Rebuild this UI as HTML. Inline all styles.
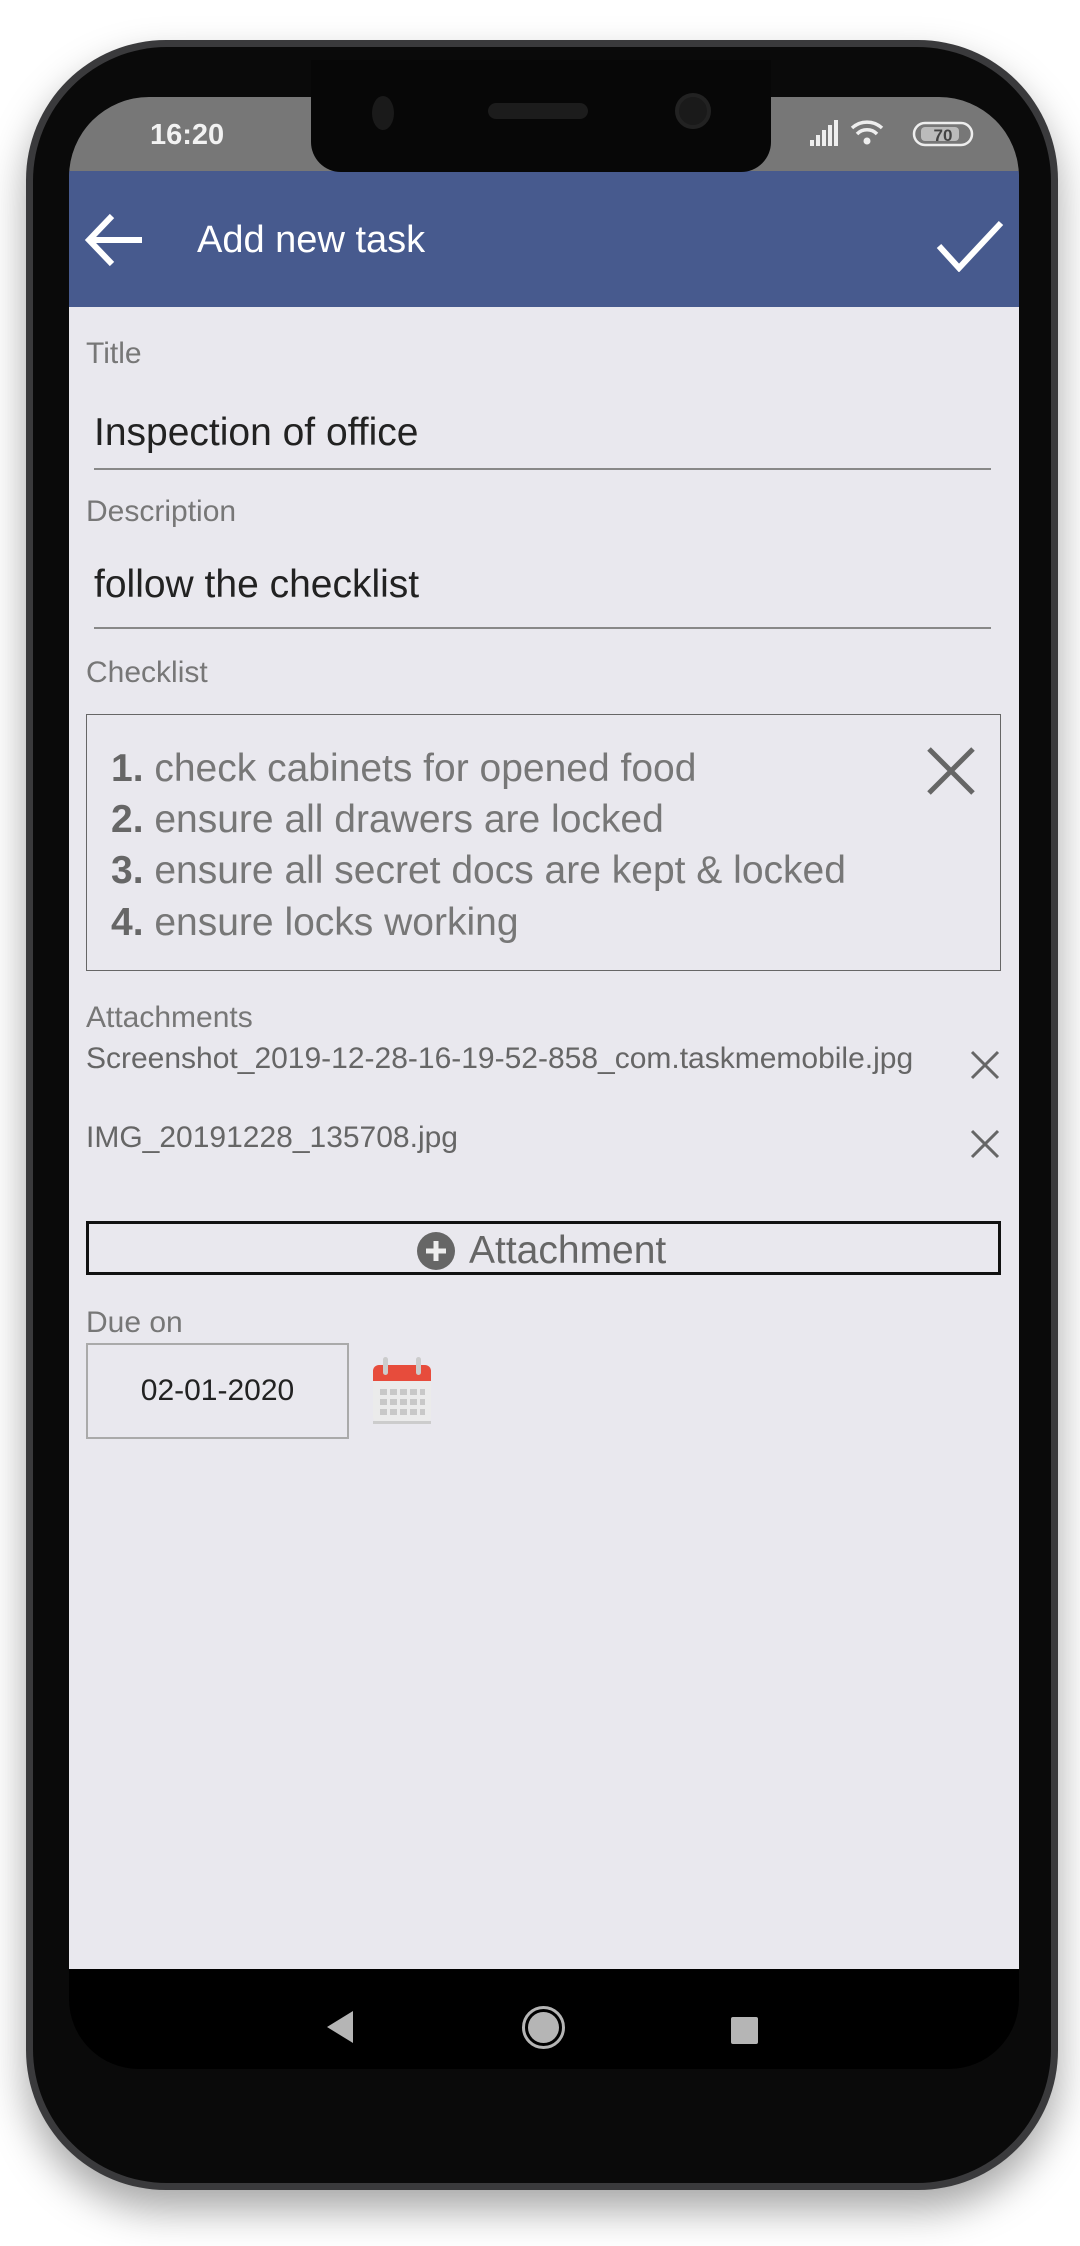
<!DOCTYPE html>
<html><head><meta charset="utf-8"><style>
*{margin:0;padding:0;box-sizing:border-box}
body{width:1080px;height:2246px;background:#fff;position:relative;overflow:hidden;font-family:"Liberation Sans",sans-serif}
.a{position:absolute}
.lbl{position:absolute;left:86px;font-size:30px;color:#777;line-height:1;white-space:nowrap}
.inp{position:absolute;left:94px;font-size:39px;color:#222;line-height:1}
.li{position:absolute;left:111px;font-size:39px;color:#777;line-height:1;white-space:nowrap}
.li b{color:#666}
.fn{position:absolute;left:86px;font-size:30px;color:#666;line-height:1;white-space:nowrap}
</style></head><body>
<div class="a" style="left:26px;top:40px;width:1032px;height:2150px;border-radius:140px;box-shadow:0 20px 40px rgba(0,0,0,.35);background:#3a3a3c"></div>
<div class="a" style="left:33px;top:47px;width:1018px;height:2136px;border-radius:134px;background:#0a0a0a"></div>
<div class="a" style="left:69px;top:97px;width:950px;height:1972px;border-radius:80px 80px 70px 70px;background:#000;overflow:hidden">
  <div class="a" style="left:0;top:0;width:950px;height:80px;background:#777"></div>
  <div class="a" style="left:0;top:74px;width:950px;height:136px;background:#475a8e"></div>
  <div class="a" style="left:0;top:210px;width:950px;height:1662px;background:#e9e8ee"></div>
</div>
<div class="a" style="left:311px;top:60px;width:460px;height:112px;background:#070707;border-radius:0 0 30px 30px"></div>
<div class="a" style="left:488px;top:103px;width:100px;height:16px;border-radius:8px;background:#1c1c1c"></div>
<div class="a" style="left:675px;top:93px;width:36px;height:36px;border-radius:50%;background:#1a1a1a;border:4px solid #222"></div>
<div class="a" style="left:372px;top:96px;width:22px;height:34px;border-radius:50%;background:#1a1a1a"></div>
<div class="a" style="left:150px;top:119px;font-size:29px;font-weight:bold;color:#f2f2f2">16:20</div>
<svg class="a" style="left:810px;top:120px" width="165" height="30" viewBox="0 0 165 30">
 <g fill="#eee"><rect x="0" y="20" width="4" height="6"/><rect x="6" y="15" width="4" height="11"/><rect x="12" y="10" width="4" height="16"/><rect x="18" y="5" width="4" height="21"/><rect x="24" y="0" width="4" height="26"/></g>
 <g fill="none" stroke="#eee" stroke-width="3.5"><path d="M42 8a22 22 0 0 1 30 0"/><path d="M47 14a14 14 0 0 1 20 0"/></g>
 <circle cx="57" cy="21" r="3.5" fill="#eee"/>
 <rect x="104" y="3" width="58" height="22" rx="11" fill="none" stroke="#eee" stroke-width="2.5"/>
 <rect x="111" y="7" width="38" height="14" rx="4" fill="#bbb"/>
 <text x="133" y="21" font-size="17" font-weight="bold" fill="#444" text-anchor="middle" font-family="Liberation Sans">70</text>
</svg>
<svg class="a" style="left:84px;top:212px" width="62" height="56" viewBox="0 0 62 56"><path d="M58 28H6M28 4L5 28l23 24" fill="none" stroke="#fff" stroke-width="6"/></svg>
<div class="a" style="left:197px;top:219px;font-size:38px;color:#fff">Add new task</div>
<svg class="a" style="left:936px;top:220px" width="68" height="52" viewBox="0 0 68 52"><path d="M3 26l20 22L65 3" fill="none" stroke="#fff" stroke-width="6"/></svg>
<div class="lbl" style="top:339px">Title</div>
<div class="inp" style="top:413px">Inspection of office</div>
<div class="a" style="left:94px;top:468px;width:897px;height:2px;background:#888"></div>
<div class="lbl" style="top:497px">Description</div>
<div class="inp" style="top:565px">follow the checklist</div>
<div class="a" style="left:94px;top:627px;width:897px;height:2px;background:#888"></div>
<div class="lbl" style="top:658px">Checklist</div>
<div class="a" style="left:86px;top:714px;width:915px;height:257px;border:1.5px solid #666"></div>
<div class="li" style="top:749px"><b>1.</b> check cabinets for opened food</div>
<div class="li" style="top:800px"><b>2.</b> ensure all drawers are locked</div>
<div class="li" style="top:851px"><b>3.</b> ensure all secret docs are kept &amp; locked</div>
<div class="li" style="top:903px"><b>4.</b> ensure locks working</div>
<svg class="a" style="left:926px;top:746px" width="50" height="50" viewBox="0 0 50 50"><path d="M3 3l44 44M47 3L3 47" stroke="#666" stroke-width="5"/></svg>
<div class="lbl" style="top:1003px">Attachments</div>
<div class="fn" style="top:1044px">Screenshot_2019-12-28-16-19-52-858_com.taskmemobile.jpg</div>
<svg class="a" style="left:970px;top:1050px" width="30" height="30" viewBox="0 0 30 30"><path d="M2 2l26 26M28 2L2 28" stroke="#666" stroke-width="3"/></svg>
<div class="fn" style="top:1123px">IMG_20191228_135708.jpg</div>
<svg class="a" style="left:970px;top:1129px" width="30" height="30" viewBox="0 0 30 30"><path d="M2 2l26 26M28 2L2 28" stroke="#666" stroke-width="3"/></svg>
<div class="a" style="left:86px;top:1221px;width:915px;height:54px;border:3px solid #111"></div>
<svg class="a" style="left:417px;top:1232px" width="38" height="38" viewBox="0 0 38 38"><circle cx="19" cy="19" r="19" fill="#666"/><path d="M19 9v20M9 19h20" stroke="#eee" stroke-width="5"/></svg>
<div class="a" style="left:469px;top:1229px;font-size:39px;color:#666">Attachment</div>
<div class="lbl" style="top:1308px">Due on</div>
<div class="a" style="left:86px;top:1343px;width:263px;height:96px;border:2px solid #aaa;font-size:30px;color:#222;text-align:center;line-height:92px">02-01-2020</div>
<svg class="a" style="left:371px;top:1355px" width="62" height="70" viewBox="0 0 62 70">
 <rect x="2" y="10" width="58" height="58" rx="6" fill="#ebebeb"/>
 <rect x="2" y="66" width="58" height="3" fill="#ccc"/>
 <path d="M2 16a6 6 0 0 1 6-6h46a6 6 0 0 1 6 6v10H2z" fill="#e74c3c"/>
 <rect x="12" y="2" width="5" height="18" rx="2.5" fill="#ccc"/><rect x="45" y="2" width="5" height="18" rx="2.5" fill="#ccc"/>
 <g fill="#c8c8c8"><rect x="9" y="34" width="7" height="6"/><rect x="19" y="34" width="7" height="6"/><rect x="29" y="34" width="7" height="6"/><rect x="39" y="34" width="7" height="6"/><rect x="49" y="34" width="5" height="6"/>
 <rect x="9" y="44" width="7" height="6"/><rect x="19" y="44" width="7" height="6"/><rect x="29" y="44" width="7" height="6"/><rect x="39" y="44" width="7" height="6"/><rect x="49" y="44" width="5" height="6"/>
 <rect x="9" y="54" width="7" height="6"/><rect x="19" y="54" width="7" height="6"/><rect x="29" y="54" width="7" height="6"/><rect x="39" y="54" width="7" height="6"/><rect x="49" y="54" width="5" height="6"/></g>
</svg>
<svg class="a" style="left:325px;top:2010px" width="30" height="34" viewBox="0 0 30 34"><path d="M28 1L2 17l26 16z" fill="#b5b5b5"/></svg>
<div class="a" style="left:522px;top:2006px;width:43px;height:43px;border-radius:50%;border:3px solid #b5b5b5"></div>
<div class="a" style="left:528px;top:2012px;width:31px;height:31px;border-radius:50%;background:#b5b5b5"></div>
<div class="a" style="left:731px;top:2017px;width:27px;height:27px;background:#b5b5b5;border-radius:2px"></div>
</body></html>
